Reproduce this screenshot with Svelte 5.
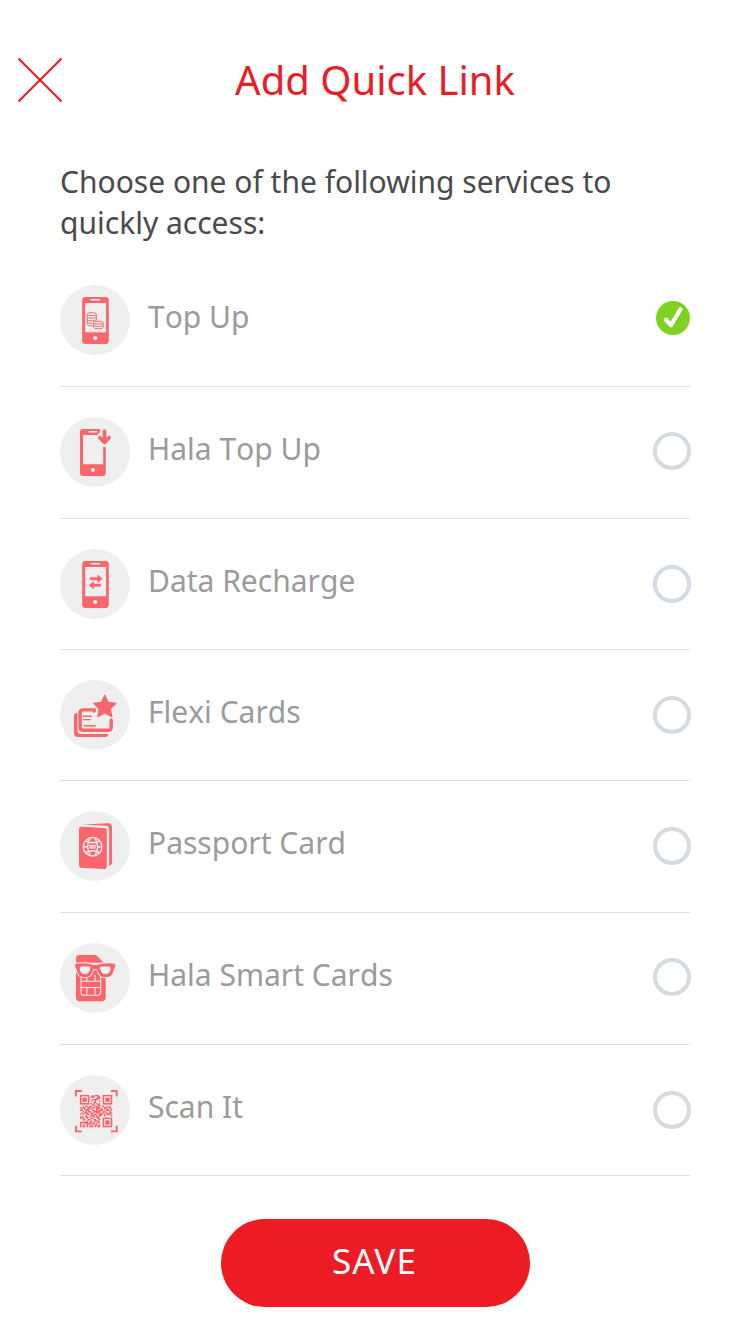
<script lang="ts">
	const services = [
		{ id: 'topup', label: 'Top Up' },
		{ id: 'hala', label: 'Hala Top Up' },
		{ id: 'data', label: 'Data Recharge' },
		{ id: 'flexi', label: 'Flexi Cards' },
		{ id: 'passport', label: 'Passport Card' },
		{ id: 'smart', label: 'Hala Smart Cards' },
		{ id: 'scan', label: 'Scan It' }
	];

	let selected = $state('topup');

	const qr = [
		'#######..#.###.. #######',
		'#.....#.###..##. #.....#',
		'#.###.#.....###. #.###.#',
		'#.###.#..####... #.###.#',
		'#.###.#.#..#..#. #.###.#',
		'#.....#...##.... #.....#',
		'#######.#.#.#.#. #######',
		'.........##..##.........',
		'..#.##.##..##.#.##..#.#.',
		'#.##..##.##.###...##.##.',
		'.#.#.##.#...##.##.#.#..#',
		'##..###..##.#.###..###.#',
		'..#.#.##..#####..##...#.',
		'.#.###..##..##.#.#.##.##',
		'#.#..##.#.##..###.#.###.',
		'....#...###.#.##..#....#',
		'###.##.#..#.##..........',
		'#.#..#..##...##. #######',
		'..##..##..##..#. #.....#',
		'.....#..#..###.. #.###.#',
		'######.##.#..##. #.###.#',
		'#..#.###.##.#... #.###.#',
		'#.#..#..#..##.#. #.....#',
		'#.##.#.###.#.##. #######'
	];

	const modules = qr
		.flatMap((row, y) => [...row].map((c, x) => (c === '#' ? `M${x} ${y}h1v1h-1z` : '')))
		.join('');
</script>

<main class="page">
	<header class="header">
		<button class="close" aria-label="Close">
			<svg width="46" height="46" viewBox="0 0 46 46">
				<path d="M1.5 1.5l43 43M44.5 1.5l-43 43" stroke="#ed1c24" stroke-width="2" />
			</svg>
		</button>
		<h1>Add Quick Link</h1>
	</header>

	<p class="intro">Choose one of the following services to quickly access:</p>

	<ul class="list">
		{#each services as service (service.id)}
			<li class="row">
				<span class="icon">
					<svg width="70" height="70" viewBox="0 0 70 70">
						{#if service.id === 'topup' || service.id === 'data'}
							<rect class="fill" x="22.2" y="12" width="26.6" height="47" rx="3" />
							<rect class="bg" x="25.2" y="18" width="20.8" height="29.3" />
							<rect class="bg" x="30.5" y="14.1" width="9.6" height="1.3" rx=".6" />
							<circle class="bg" cx="35.2" cy="53" r="2.1" />
						{/if}

						{#if service.id === 'topup'}
							<g class="thin">
								<ellipse cx="31.8" cy="29.2" rx="4.5" ry="1.5" />
								<path d="M27.3 29.2v10.2q0 1.6 5.2 1.6M36.3 29.2v6M27.3 31.7q0 1.6 4.5 1.6t4.5-1.6M27.3 34.3q0 1.6 4.5 1.6t4.5-1.6M27.3 36.9q0 1.6 5 1.6" />
								<ellipse cx="38.3" cy="37.6" rx="4.8" ry="1.5" />
								<path d="M33.5 37.6v4.6q0 1.6 4.8 1.6t4.8-1.6v-4.6M33.5 39.9q0 1.6 4.8 1.6t4.8-1.6" />
							</g>
						{:else if service.id === 'hala'}
							<path
								class="fill"
								fill-rule="evenodd"
								d="M23.3 12H40v3.5q-2.2.7-2.4 2.5H23v29.3h20.2V30h2.6v26q0 3-3 3H23q-3 0-3-3V15q0-3 3-3zM28.3 14.1v1.4h9v-1.4z"
							/>
							<circle class="bg" cx="33" cy="53" r="2.1" />
							<path class="arrow" d="M44.5 14.2v11M39.8 20.8l4.7 4.7 4.7-4.7" />
						{:else if service.id === 'data'}
							<path
								class="fill arrows"
								d="M30.2 28.4h7.6v-2.5l4.5 3.8-4.5 3.8v-2.6h-7.6zM40.6 34.9h-7v-2.5l-4.5 3.8 4.5 3.8v-2.6h7z"
							/>
						{:else if service.id === 'flexi'}
							<path
								class="fill"
								d="M14 36.6q0-3.8 3.4-3.8v17.5q0 3.6 3.6 3.6h27.3q-.3 3.1-3.2 3.1H18q-4 0-4-4z"
							/>
							<path class="card" d="M34.2 31V29.9H23q-2.9 0-2.9 2.9v14.5q0 3 3 3h25.2q2.9 0 2.9-3v-7.4" />
							<path class="lines" d="M22.8 36.3h9M22.8 39.6h7.8M23.8 45.7h12" />
							<path
								class="star"
								d="M44.8 15l3.5 7.3 8 1-5.8 5.6 1.4 8-7.1-3.9-7.1 3.9 1.4-8-5.8-5.6 8-1z"
							/>
						{:else if service.id === 'passport'}
							<path class="fill" d="M22.8 13.6L48 12.2q4 0 4 4v35.4q0 2.6-2.9 3.1V18.5q0-3.4-3.6-3.7z" />
							<path
								class="fill"
								d="M21 15.7l23 1.2q2.8.1 2.8 2.8v35.8q0 2.6-2.8 2.5l-22.8-1.3q-2.2-.1-2.2-2.4V18q0-2.3 2-2.3z"
							/>
							<g class="globe">
								<circle cx="32.6" cy="35.7" r="9.3" />
								<path d="M30.4 26.6q-5.6 9.1 0 18.2M34.8 26.6q5.6 9.1 0 18.2M25.6 29.8q7 3.8 14 0M25.6 41.6q7-3.8 14 0M23.3 35.7h4.2M37.7 35.7h4.2" />
								<path d="M29.4 34.7h6.4M29.4 36.9h6.4" />
							</g>
						{:else if service.id === 'smart'}
							<path class="fill" d="M19.5 12H35q1 0 1.8.7l7 7H16v-4.2q0-3.5 3.5-3.5z" />
							<path class="fill" d="M16 25h29.7v29.5q0 3.7-3.7 3.7H19.7q-3.7 0-3.7-3.7z" />
							<path
								class="chip"
								d="M21 33v16.5q0 2.8 2.8 2.8h14q2.8 0 2.8-2.8V33M21 38.2h19.6M21 44.5h19.6M26.8 44.5v7.8M35 44.5v7.8M26.8 33v5M35 32v6"
							/>
							<path
								class="glasses"
								d="M15.3 20.7q9.4-1.2 16.3.8 3.6 1 7.2 0 6.9-2 16.3-.8v3.7q-1 .4-1.5 2.8-1 7-8 7-6.8 0-8-7-.3-1-1.2-1h-2.4q-.9 0-1.2 1-1.2 7-8 7-7 0-8-7-.5-2.4-1.5-2.8z"
							/>
							<path
								class="bg"
								d="M19.8 25.2q0-1.8 1.8-1.8h7.2q1.8 0 1.5 1.8-.8 5.8-5.2 5.8-5.3 0-5.3-5.8zM50.6 25.2q0-1.8-1.8-1.8h-7.2q-1.8 0-1.5 1.8.8 5.8 5.2 5.8 5.3 0 5.3-5.8z"
							/>
						{:else}
							<path class="bracket" d="M15.9 21.5V16h6M50.9 16h5.8v5.5M15.9 50.8v5.6h6M50.9 56.4h5.8v-5.6" />
							<path class="fill modules" d={modules} transform="translate(20 20) scale(1.34)" />
						{/if}
					</svg>
				</span>
				<span class="label">{service.label}</span>
				<button class="radio" aria-label={service.label} onclick={() => (selected = service.id)}>
					{#if selected === service.id}
						<svg width="38" height="38" viewBox="0 0 38 38">
							<circle cx="20" cy="18" r="17" fill="#7ed321" />
							<path
								d="M13 19.8l5 5.4 9.4-16"
								fill="none"
								stroke="#fff"
								stroke-width="4.2"
								stroke-linecap="round"
								stroke-linejoin="round"
							/>
						</svg>
					{:else}
						<span class="ring"></span>
					{/if}
				</button>
			</li>
		{/each}
	</ul>

	<button class="save">SAVE</button>
</main>

<style>
	:global(body) {
		margin: 0;
		background: #fff;
	}

	.page {
		box-sizing: border-box;
		width: 750px;
		height: 1334px;
		overflow: hidden;
		display: flex;
		flex-direction: column;
		font-family: 'Noto Sans', sans-serif;
	}

	button {
		padding: 0;
		border: none;
		background: none;
		font-family: inherit;
		cursor: pointer;
	}

	svg {
		display: block;
	}

	.header {
		display: grid;
		grid-template-columns: 63px 1fr 63px;
		align-items: center;
		height: 160px;
	}

	.close {
		margin-left: 17px;
		width: 46px;
		height: 46px;
	}

	h1 {
		margin: 0;
		color: #ed1c24;
		font-size: 40px;
		font-weight: 400;
		line-height: 54px;
		text-align: center;
	}

	.intro {
		margin: 1px 60px 0;
		height: 94px;
		color: #4a4a4a;
		font-size: 30px;
		line-height: 41px;
	}

	.list {
		margin: 0 60px;
		padding: 0;
		list-style: none;
	}

	.row {
		box-sizing: border-box;
		display: flex;
		align-items: flex-start;
		height: 132px;
		padding-top: 30px;
		border-bottom: 1px solid #e1e1e1;
	}

	.row:nth-child(3),
	.row:nth-child(4),
	.row:nth-child(7) {
		height: 131px;
	}

	.icon {
		width: 70px;
		height: 70px;
		border-radius: 50%;
		background: #efefef;
	}

	.label {
		flex: 1;
		margin: 11px 0 0 18px;
		color: #9b9b9b;
		font-size: 30px;
		font-kerning: none;
		line-height: 41px;
	}

	.radio {
		margin: 16px -1px 0 0;
		width: 38px;
		height: 38px;
	}

	.row:nth-child(1) .radio,
	.row:nth-child(2) .radio,
	.row:nth-child(6) .radio {
		margin-top: 15px;
	}

	.ring {
		box-sizing: border-box;
		display: block;
		width: 38px;
		height: 38px;
		border: 4px solid #d4dbe1;
		border-radius: 50%;
	}

	.save {
		margin: 43px 0 0 221px;
		width: 309px;
		height: 88px;
		padding: 0 2px 6px 0;
		border-radius: 44px;
		background: #ed1c24;
		color: #fff;
		font-size: 35px;
		letter-spacing: 1.1px;
	}

	/* icon parts */
	.fill,
	.star {
		fill: #fa666c;
	}

	.bg {
		fill: #efefef;
	}

	.thin,
	.arrow,
	.card,
	.lines,
	.bracket {
		fill: none;
		stroke: #fa666c;
	}

	.thin {
		stroke-width: 1;
	}

	.arrow {
		stroke-width: 3.7;
		stroke-linecap: round;
		stroke-linejoin: round;
	}

	.arrows {
		stroke: #fa666c;
		stroke-width: 0.5;
		stroke-linejoin: round;
	}

	.card {
		stroke-width: 3.4;
		stroke-linecap: round;
	}

	.lines {
		stroke-width: 1.4;
	}

	.star {
		stroke: #fa666c;
		stroke-width: 1;
		stroke-linejoin: round;
	}

	.globe,
	.chip {
		fill: none;
		stroke: #efefef;
		stroke-width: 1.5;
	}

	.globe {
		stroke-width: 1.4;
	}

	.chip {
		stroke-width: 1.1;
	}

	.glasses {
		fill: #fa666c;
		stroke: #efefef;
		stroke-width: 2;
		paint-order: stroke;
	}

	.bracket {
		stroke-width: 1.9;
	}

	.modules {
		stroke: #fa666c;
		stroke-width: 0.1;
	}
</style>
